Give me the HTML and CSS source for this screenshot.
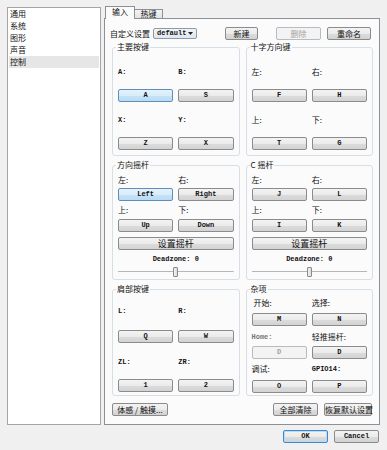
FILE: index.html
```html
<!DOCTYPE html>
<html lang="zh">
  <head>
    <meta charset="utf-8" />
    <title>控制设置</title>
    <link rel="stylesheet" href="styles.css">
  </head>
  <body>
    <div class="window">
      <ul class="nav">
        <li>通用</li>
        <li>系统</li>
        <li>图形</li>
        <li>声音</li>
        <li class="on">控制</li>
      </ul>

      <div class="side">
        <div class="tabs">
          <span class="tab on">输入</span>
          <span class="tab">热键</span>
        </div>

        <div class="pane">
          <div class="head">
            <span class="cjk">自定义设置</span>
            <span class="combo"><span class="mono">default</span><svg width="5" height="3" viewBox="0 0 5 3"><path d="M0 0h5L2.5 3z" fill="#222"/></svg></span>
            <span class="grow"></span>
            <button class="btn cjk w33">新建</button>
            <button class="btn cjk w45 off">删除</button>
            <button class="btn cjk w44">重命名</button>
          </div>

          <div class="groups">
            <!-- main buttons -->
            <fieldset class="group">
              <legend>主要按键</legend>
              <div class="pair lbl mono pt12"><span>A:</span><span>B:</span></div>
              <div class="pair mt11"><button class="btn mono hot">A</button><button class="btn mono">S</button></div>
              <div class="pair lbl mono mt12"><span>X:</span><span>Y:</span></div>
              <div class="pair mt11"><button class="btn mono">Z</button><button class="btn mono">X</button></div>
            </fieldset>

            <fieldset class="group">
              <legend>十字方向键</legend>
              <div class="pair lbl cjk pt12"><span>左:</span><span>右:</span></div>
              <div class="pair mt11"><button class="btn mono">F</button><button class="btn mono">H</button></div>
              <div class="pair lbl cjk mt12"><span>上:</span><span>下:</span></div>
              <div class="pair mt11"><button class="btn mono">T</button><button class="btn mono">G</button></div>
            </fieldset>

            <!-- sticks -->
            <fieldset class="group">
              <legend>方向摇杆</legend>
              <div class="pair lbl cjk pt2"><span>左:</span><span>右:</span></div>
              <div class="pair mt2"><button class="btn mono hot">Left</button><button class="btn mono">Right</button></div>
              <div class="pair lbl cjk mt3"><span>上:</span><span>下:</span></div>
              <div class="pair mt3"><button class="btn mono">Up</button><button class="btn mono">Down</button></div>
              <button class="btn cjk big mt5">设置摇杆</button>
              <div class="dead mono mt3">Deadzone: 0</div>
              <div class="slider mt1"><span class="thumb"></span></div>
            </fieldset>

            <fieldset class="group">
              <legend>C 摇杆</legend>
              <div class="pair lbl cjk pt2"><span>左:</span><span>右:</span></div>
              <div class="pair mt2"><button class="btn mono">J</button><button class="btn mono">L</button></div>
              <div class="pair lbl cjk mt3"><span>上:</span><span>下:</span></div>
              <div class="pair mt3"><button class="btn mono">I</button><button class="btn mono">K</button></div>
              <button class="btn cjk big mt5">设置摇杆</button>
              <div class="dead mono mt3">Deadzone: 0</div>
              <div class="slider mt1"><span class="thumb"></span></div>
            </fieldset>

            <!-- shoulder / misc -->
            <fieldset class="group">
              <legend>肩部按键</legend>
              <div class="pair lbl mono pt9"><span>L:</span><span>R:</span></div>
              <div class="pair mt13"><button class="btn mono">Q</button><button class="btn mono">W</button></div>
              <div class="pair lbl mono mt13"><span>ZL:</span><span>ZR:</span></div>
              <div class="pair mt11"><button class="btn mono">1</button><button class="btn mono">2</button></div>
            </fieldset>

            <fieldset class="group">
              <legend>杂项</legend>
              <div class="pair lbl cjk pt1"><span class="ind">开始:</span><span>选择:</span></div>
              <div class="pair mt4"><button class="btn mono">M</button><button class="btn mono">N</button></div>
              <div class="pair lbl mt5"><span class="mono gray">Home:</span><span class="cjk">轻推摇杆:</span></div>
              <div class="pair mt3"><button class="btn mono off">D</button><button class="btn mono">D</button></div>
              <div class="pair lbl mt4"><span class="cjk">调试:</span><span class="mono">GPIO14:</span></div>
              <div class="pair mt5"><button class="btn mono">O</button><button class="btn mono">P</button></div>
            </fieldset>
          </div>

          <div class="foot">
            <button class="btn cjk w56">体感 / 触摸...</button>
            <span class="grow"></span>
            <button class="btn cjk w45">全部清除</button>
            <button class="btn cjk w48">恢复默认设置</button>
          </div>
        </div>

        <div class="dialog-btns">
          <button class="btn mono w45 default">OK</button>
          <button class="btn mono w45">Cancel</button>
        </div>
      </div>
    </div>
  </body>
</html>
```

FILE: styles.css
```css
html,
body {
  margin: 0;
  padding: 0;
  height: 100%;
  overflow: hidden;
  background: #f0f0f0;
  color: #111;
  font-family: 'Noto Sans CJK SC', sans-serif;
  font-size: 8px;
}
.window {
  display: flex;
  gap: 3px;
  padding: 6px 7px 0 7px;
}
.cjk {
  font-family: 'Noto Sans CJK SC', sans-serif;
  font-size: 8px;
}
.mono {
  font-family: 'Liberation Mono', 'Noto Sans CJK SC', monospace;
  font-size: 7px;
  font-weight: bold;
}
.gray {
  color: #777;
}
.grow {
  flex: 1;
}

/* left list */
.nav {
  width: 94px;
  height: 418px;
  box-sizing: border-box;
  margin: 1px 0 0 0;
  padding: 0 1px;
  list-style: none;
  background: #fff;
  border: 1px solid #a5a5a5;
}
.nav li {
  height: 12px;
  line-height: 12px;
  padding-left: 1px;
}
.nav li.on {
  background: #e6e6e6;
}

/* tabs */
.side {
  width: 276px;
}
.tabs {
  display: flex;
  align-items: flex-end;
  height: 12px;
  padding-left: 1px;
}
.tab {
  width: 28px;
  height: 9px;
  line-height: 8px;
  box-sizing: border-box;
  padding: 0;
  text-align: center;
  white-space: nowrap;
  border: 1px solid #8d9099;
  border-bottom: 0;
  border-left: 0;
  background: linear-gradient(#f3f3f3, #e3e3e3);
}
.tab.on {
  width: 30px;
  height: 13px;
  line-height: 10px;
  margin-bottom: -1px;
  border-left: 1px solid #8d9099;
  background: #fbfbfb;
  z-index: 1;
}
.pane {
  height: 407px;
  box-sizing: border-box;
  padding: 8px 6px 8px 7px;
  border: 1px solid #8d9099;
  background: #fbfbfb;
}
.head {
  display: flex;
  align-items: center;
  height: 12px;
  margin: 0 2px 0 -2px;
}
.combo {
  display: flex;
  align-items: center;
  justify-content: space-between;
  width: 44px;
  height: 11px;
  box-sizing: border-box;
  margin-left: 3px;
  padding: 0 3px 0 3px;
  border: 1px solid #8e9aa8;
  border-radius: 2px;
  background: linear-gradient(#f1f5f9, #dfe6ee);
  font-size: 6.5px;
}
.head .btn + .btn {
  margin-left: 6px;
}
.head .btn.off {
  margin-left: 18px;
}

/* buttons */
.btn {
  display: block;
  width: 100%;
  height: 13px;
  margin: 0;
  padding: 0;
  box-sizing: border-box;
  border: 1px solid #8b8b8b;
  border-radius: 2px;
  background: linear-gradient(#f3f3f3 0%, #ebebeb 50%, #dcdcdc 51%, #d3d3d3 100%);
  color: #111;
  line-height: 11px;
  white-space: nowrap;
}
.btn.hot {
  border-color: #5f8fb8;
  background: linear-gradient(#e6f2fb 0%, #d8ecfa 50%, #c6e3f7 51%, #b9dbf3 100%);
}
.btn.off {
  border-color: #b8bcbf;
  background: #f3f3f3;
  color: #a3a3a3;
}
.btn.default {
  border-color: #3f88c9;
  box-shadow: inset 0 0 0 1px #b5dbf6;
}
.btn.big {
  font-size: 9px;
}
.w33 { width: 33px; }
.w44 { width: 44px; }
.w45 { width: 45px; }
.w48 { width: 48px; }
.w56 { width: 56px; }

/* group boxes */
.groups {
  display: grid;
  grid-template-columns: 1fr 1fr;
  grid-template-rows: 116px 122px 114px;
  column-gap: 6px;
  row-gap: 2px;
  margin-top: 1px;
}
.group {
  min-width: 0;
  margin: 0;
  padding: 0 5px;
  border: 1px solid #d5dfe5;
  border-radius: 3px;
}
.group legend {
  margin-left: -2px;
  padding: 0 1px;
  line-height: 14px;
}
.pair {
  display: grid;
  grid-template-columns: 1fr 1fr;
  column-gap: 5px;
}
.lbl {
  height: 12px;
  line-height: 12px;
}
.ind {
  padding-left: 2px;
}
.dead {
  height: 12px;
  line-height: 12px;
  text-align: center;
}
.slider {
  display: flex;
  justify-content: center;
  align-items: center;
  height: 11px;
  background: linear-gradient(#b6b6b6, #b6b6b6) center / 100% 1px no-repeat;
}
.thumb {
  width: 5px;
  height: 10px;
  box-sizing: border-box;
  border: 1px solid #8a8a8a;
  border-radius: 1px;
  background: linear-gradient(90deg, #f4f4f4, #dadada);
}

.pt1 { padding-top: 1px; }
.pt2 { padding-top: 2px; }
.pt9 { padding-top: 9px; }
.pt12 { padding-top: 12px; }
.mt1 { margin-top: 1px; }
.mt2 { margin-top: 2px; }
.mt3 { margin-top: 3px; }
.mt4 { margin-top: 4px; }
.mt5 { margin-top: 5px; }
.mt11 { margin-top: 11px; }
.mt12 { margin-top: 12px; }
.mt13 { margin-top: 13px; }

.foot {
  display: flex;
  align-items: center;
  height: 13px;
  margin: 7px 1px 0 0;
}
.foot .btn + .btn {
  margin-left: 6px;
}
.dialog-btns {
  display: flex;
  justify-content: flex-end;
  gap: 6px;
  margin: 5px 1px 0 0;
}
```
